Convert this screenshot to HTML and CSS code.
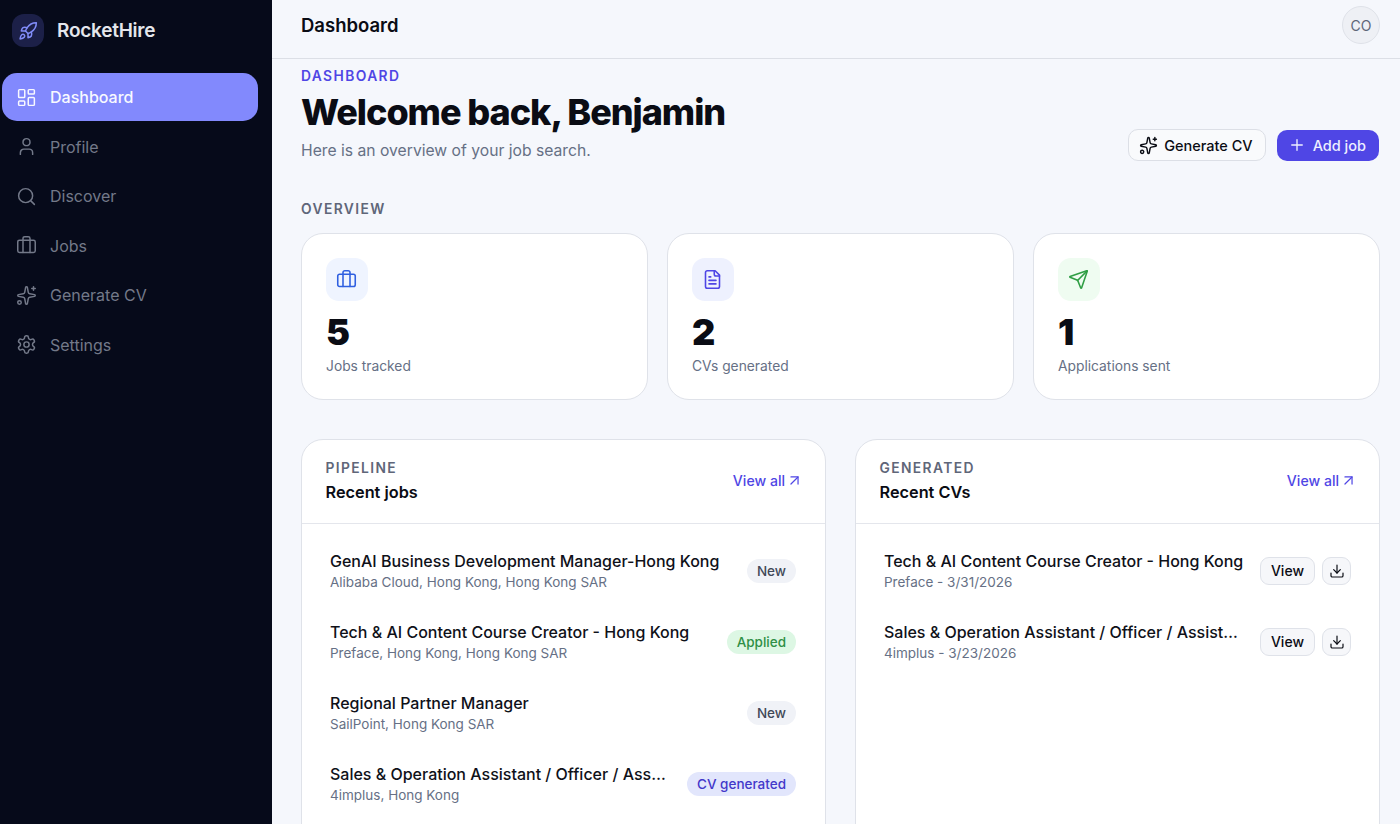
FILE: index.html
```html
<!DOCTYPE html>
<html lang="en">
<head>
    <meta charset="UTF-8">
    <meta name="viewport" content="width=device-width, initial-scale=1.0">
    <title>RocketHire</title>

    <link rel="stylesheet" href="styles.css">
</head>
<body>
    <svg class="sprite" xmlns="http://www.w3.org/2000/svg">
        <symbol id="i-rocket" viewBox="0 0 24 24"><path d="M4.5 16.5c-1.5 1.26-2 5-2 5s3.74-.5 5-2c.71-.84.7-2.13-.09-2.91a2.18 2.18 0 0 0-2.91-.09z"/><path d="m12 15-3-3a22 22 0 0 1 2-3.95A12.88 12.88 0 0 1 22 2c0 2.72-.78 7.5-6 11a22.35 22.35 0 0 1-4 2z"/><path d="M9 12H4s.55-3.03 2-4c1.62-1.08 5 0 5 0"/><path d="M12 15v5s3.03-.55 4-2c1.08-1.62 0-5 0-5"/></symbol>
        <symbol id="i-dashboard" viewBox="0 0 24 24"><rect x="3" y="3" width="7" height="9" rx="1"/><rect x="14" y="3" width="7" height="5" rx="1"/><rect x="14" y="12" width="7" height="9" rx="1"/><rect x="3" y="16" width="7" height="5" rx="1"/></symbol>
        <symbol id="i-user" viewBox="0 0 24 24"><path d="M19 21v-2a4 4 0 0 0-4-4H9a4 4 0 0 0-4 4v2"/><circle cx="12" cy="7" r="4"/></symbol>
        <symbol id="i-search" viewBox="0 0 24 24"><circle cx="11" cy="11" r="8"/><path d="m21 21-4.3-4.3"/></symbol>
        <symbol id="i-briefcase" viewBox="0 0 24 24"><path d="M16 20V4a2 2 0 0 0-2-2h-4a2 2 0 0 0-2 2v16"/><rect x="2" y="6" width="20" height="14" rx="2"/></symbol>
        <symbol id="i-sparkles" viewBox="0 0 24 24"><path d="M11.017 2.814a1 1 0 0 1 1.966 0l1.051 5.558a2 2 0 0 0 1.594 1.594l5.558 1.051a1 1 0 0 1 0 1.966l-5.558 1.051a2 2 0 0 0-1.594 1.594l-1.051 5.558a1 1 0 0 1-1.966 0l-1.051-5.558a2 2 0 0 0-1.594-1.594l-5.558-1.051a1 1 0 0 1 0-1.966l5.558-1.051a2 2 0 0 0 1.594-1.594z"/><path d="M20 2v4"/><path d="M22 4h-4"/><circle cx="4" cy="20" r="2"/></symbol>
        <symbol id="i-settings" viewBox="0 0 24 24"><path d="M12.22 2h-.44a2 2 0 0 0-2 2v.18a2 2 0 0 1-1 1.73l-.43.25a2 2 0 0 1-2 0l-.15-.08a2 2 0 0 0-2.73.73l-.22.38a2 2 0 0 0 .73 2.73l.15.1a2 2 0 0 1 1 1.72v.51a2 2 0 0 1-1 1.74l-.15.09a2 2 0 0 0-.73 2.73l.22.38a2 2 0 0 0 2.73.73l.15-.08a2 2 0 0 1 2 0l.43.25a2 2 0 0 1 1 1.73V20a2 2 0 0 0 2 2h.44a2 2 0 0 0 2-2v-.18a2 2 0 0 1 1-1.73l.43-.25a2 2 0 0 1 2 0l.15.08a2 2 0 0 0 2.73-.73l.22-.39a2 2 0 0 0-.73-2.73l-.15-.08a2 2 0 0 1-1-1.74v-.5a2 2 0 0 1 1-1.74l.15-.09a2 2 0 0 0 .73-2.73l-.22-.38a2 2 0 0 0-2.73-.73l-.15.08a2 2 0 0 1-2 0l-.43-.25a2 2 0 0 1-1-1.73V4a2 2 0 0 0-2-2z"/><circle cx="12" cy="12" r="3"/></symbol>
        <symbol id="i-file" viewBox="0 0 24 24"><path d="M15 2H6a2 2 0 0 0-2 2v16a2 2 0 0 0 2 2h12a2 2 0 0 0 2-2V7Z"/><path d="M14 2v4a2 2 0 0 0 2 2h4"/><path d="M10 9H8"/><path d="M16 13H8"/><path d="M16 17H8"/></symbol>
        <symbol id="i-send" viewBox="0 0 24 24"><path d="M14.536 21.686a.5.5 0 0 0 .937-.024l6.5-19a.496.496 0 0 0-.635-.635l-19 6.5a.5.5 0 0 0-.024.937l7.93 3.18a2 2 0 0 1 1.112 1.11z"/><path d="m21.854 2.147-10.94 10.939"/></symbol>
        <symbol id="i-plus" viewBox="0 0 24 24"><path d="M5 12h14"/><path d="M12 5v14"/></symbol>
        <symbol id="i-arrow" viewBox="0 0 24 24"><path d="M7 7h10v10"/><path d="M7 17 17 7"/></symbol>
        <symbol id="i-download" viewBox="0 0 24 24"><path d="M12 15V3"/><path d="M21 15v4a2 2 0 0 1-2 2H5a2 2 0 0 1-2-2v-4"/><path d="m7 10 5 5 5-5"/></symbol>
    </svg>

    <div class="app">
        <aside class="sidebar">
            <div class="brand">
                <span class="brand-mark"><svg class="icon"><use href="#i-rocket"/></svg></span>
                <span class="brand-name">RocketHire</span>
            </div>
            <nav class="nav">
                <a class="nav-item active"><svg class="icon"><use href="#i-dashboard"/></svg>Dashboard</a>
                <a class="nav-item"><svg class="icon"><use href="#i-user"/></svg>Profile</a>
                <a class="nav-item"><svg class="icon"><use href="#i-search"/></svg>Discover</a>
                <a class="nav-item"><svg class="icon"><use href="#i-briefcase"/></svg>Jobs</a>
                <a class="nav-item"><svg class="icon"><use href="#i-sparkles"/></svg>Generate CV</a>
                <a class="nav-item"><svg class="icon"><use href="#i-settings"/></svg>Settings</a>
            </nav>
        </aside>

        <div class="main">
            <header class="topbar">
                <span class="topbar-title">Dashboard</span>
                <span class="avatar">CO</span>
            </header>

            <div class="content">
                <section class="page-head">
                    <div>
                        <div class="eyebrow">DASHBOARD</div>
                        <h1>Welcome back, Benjamin</h1>
                        <p class="lead">Here is an overview of your job search.</p>
                    </div>
                    <div class="actions">
                        <button class="btn btn-outline"><svg class="icon"><use href="#i-sparkles"/></svg>Generate CV</button>
                        <button class="btn btn-primary"><svg class="icon"><use href="#i-plus"/></svg>Add job</button>
                    </div>
                </section>

                <div class="section-label">OVERVIEW</div>
                <section class="stats">
                    <div class="stat">
                        <span class="stat-icon blue"><svg class="icon"><use href="#i-briefcase"/></svg></span>
                        <div class="stat-value">5</div>
                        <div class="stat-label">Jobs tracked</div>
                    </div>
                    <div class="stat">
                        <span class="stat-icon indigo"><svg class="icon"><use href="#i-file"/></svg></span>
                        <div class="stat-value">2</div>
                        <div class="stat-label">CVs generated</div>
                    </div>
                    <div class="stat">
                        <span class="stat-icon green"><svg class="icon"><use href="#i-send"/></svg></span>
                        <div class="stat-value">1</div>
                        <div class="stat-label">Applications sent</div>
                    </div>
                </section>

                <section class="panels">
                    <div class="panel">
                        <div class="panel-head">
                            <div>
                                <div class="panel-label">PIPELINE</div>
                                <div class="panel-title">Recent jobs</div>
                            </div>
                            <a class="view-all">View all<svg class="icon"><use href="#i-arrow"/></svg></a>
                        </div>
                        <div class="list">
                            <div class="row">
                                <div class="row-text">
                                    <div class="row-title">GenAI Business Development Manager-Hong Kong</div>
                                    <div class="row-meta">Alibaba Cloud, Hong Kong, Hong Kong SAR</div>
                                </div>
                                <span class="badge">New</span>
                            </div>
                            <div class="row">
                                <div class="row-text">
                                    <div class="row-title">Tech &amp; AI Content Course Creator - Hong Kong</div>
                                    <div class="row-meta">Preface, Hong Kong, Hong Kong SAR</div>
                                </div>
                                <span class="badge applied">Applied</span>
                            </div>
                            <div class="row">
                                <div class="row-text">
                                    <div class="row-title">Regional Partner Manager</div>
                                    <div class="row-meta">SailPoint, Hong Kong SAR</div>
                                </div>
                                <span class="badge">New</span>
                            </div>
                            <div class="row">
                                <div class="row-text">
                                    <div class="row-title">Sales &amp; Operation Assistant / Officer / Assistant Manager</div>
                                    <div class="row-meta">4implus, Hong Kong</div>
                                </div>
                                <span class="badge generated">CV generated</span>
                            </div>
                        </div>
                    </div>

                    <div class="panel">
                        <div class="panel-head">
                            <div>
                                <div class="panel-label">GENERATED</div>
                                <div class="panel-title">Recent CVs</div>
                            </div>
                            <a class="view-all">View all<svg class="icon"><use href="#i-arrow"/></svg></a>
                        </div>
                        <div class="list">
                            <div class="row">
                                <div class="row-text">
                                    <div class="row-title">Tech &amp; AI Content Course Creator - Hong Kong</div>
                                    <div class="row-meta">Preface - 3/31/2026</div>
                                </div>
                                <div class="row-actions">
                                    <button class="mini-btn">View</button>
                                    <button class="mini-btn square"><svg class="icon"><use href="#i-download"/></svg></button>
                                </div>
                            </div>
                            <div class="row">
                                <div class="row-text">
                                    <div class="row-title">Sales &amp; Operation Assistant / Officer / Assistant Manager</div>
                                    <div class="row-meta">4implus - 3/23/2026</div>
                                </div>
                                <div class="row-actions">
                                    <button class="mini-btn">View</button>
                                    <button class="mini-btn square"><svg class="icon"><use href="#i-download"/></svg></button>
                                </div>
                            </div>
                        </div>
                    </div>
                </section>
            </div>
        </div>
    </div>
</body>
</html>
```

FILE: styles.css
```css
* {
    box-sizing: border-box;
}

html, body {
    height: 100%;
}

body {
    margin: 0;
    overflow: hidden;
    font-family: "Inter", "Liberation Sans", sans-serif;
    color: #0a0c14;
    background: #f5f7fc;
}

.sprite {
    display: none;
}

.icon {
    width: 18px;
    height: 18px;
    flex: none;
    fill: none;
    stroke: currentColor;
    stroke-width: 1.8;
    stroke-linecap: round;
    stroke-linejoin: round;
}

.app {
    display: flex;
    height: 824px;
    overflow: hidden;
}

/* sidebar */
.sidebar {
    width: 272px;
    flex: none;
    background: #060a1a;
    padding: 14px 14px 0 2px;
}

.brand {
    display: flex;
    align-items: center;
    gap: 13px;
    height: 33px;
    padding-left: 10px;
    margin-bottom: 26px;
}

.brand-mark {
    width: 32px;
    height: 33px;
    display: flex;
    align-items: center;
    justify-content: center;
    border-radius: 12px;
    background: #1c2048;
    color: #818cf8;
}

.brand-mark .icon {
    width: 20px;
    height: 20px;
}

.brand-name {
    font-size: 19px;
    line-height: 31px;
    font-weight: 600;
    letter-spacing: -0.25px;
    color: #e4e6ec;
}

.nav {
    display: flex;
    flex-direction: column;
    gap: 1.5px;
}

.nav-item {
    display: flex;
    align-items: center;
    gap: 13.5px;
    height: 48px;
    padding-left: 13.5px;
    border-radius: 15px;
    font-size: 16px;
    font-weight: 400;
    color: #737989;
}

.nav-item .icon {
    width: 21px;
    height: 21px;
    stroke-width: 1.7;
}

.nav-item.active {
    background: #8289fd;
    color: #f8f9ff;
    font-weight: 500;
}

/* main column */
.main {
    flex: 1;
    min-width: 0;
    height: 824px;
    overflow: hidden;
}

.topbar {
    height: 59px;
    display: flex;
    align-items: center;
    justify-content: space-between;
    padding: 0 20px 8px 29px;
    border-bottom: 1px solid #dcdfe6;
}

.topbar-title {
    font-size: 18.5px;
    font-weight: 600;
}

.avatar {
    width: 38px;
    height: 38px;
    display: flex;
    align-items: center;
    justify-content: center;
    border-radius: 50%;
    border: 1px solid #dfe2e9;
    background: #eef0f5;
    font-size: 14px;
    color: #5f6679;
}

.content {
    padding: 8px 20px 0 29px;
}

.page-head {
    display: flex;
    align-items: flex-end;
    justify-content: space-between;
}

.eyebrow {
    font-size: 13.8px;
    line-height: 18px;
    font-weight: 600;
    letter-spacing: 1.4px;
    color: #4f46e5;
}

h1 {
    margin: 7px 0 0;
    font-size: 36px;
    line-height: 40px;
    font-weight: 800;
    letter-spacing: -1.05px;
    color: #0a0c14;
}

.lead {
    margin: 8px 0 0;
    font-size: 15.7px;
    line-height: 22px;
    color: #667085;
}

.actions {
    display: flex;
    align-items: center;
    gap: 11px;
    margin: 0 1px 1px 0;
}

.btn {
    display: flex;
    align-items: center;
    border-radius: 10px;
    font-family: inherit;
    font-size: 14.5px;
    font-weight: 500;
}

.btn-outline {
    gap: 6px;
    height: 32px;
    padding: 0 12px 0 10px;
    border: 1px solid #dcdfe6;
    background: #f9fafc;
    color: #0a0c14;
}

.btn-outline .icon {
    width: 19px;
    height: 19px;
}

.btn-primary {
    gap: 7px;
    height: 31px;
    padding: 0 13px 0 11px;
    border: 0;
    background: #4f46e5;
    color: #eef0ff;
}

.section-label {
    margin-top: 38px;
    font-size: 13.8px;
    line-height: 18px;
    font-weight: 600;
    letter-spacing: 1.4px;
    color: #5f6679;
}

/* stat cards */
.stats {
    display: grid;
    grid-template-columns: repeat(3, 1fr);
    gap: 19px;
    margin-top: 15px;
}

.stat {
    height: 167px;
    padding: 24px;
    background: #fff;
    border: 1px solid #dfe2e9;
    border-radius: 22px;
}

.stat-icon {
    width: 42.5px;
    height: 42.5px;
    margin-left: -0.5px;
    display: flex;
    align-items: center;
    justify-content: center;
    border-radius: 13px;
}

.stat-icon .icon {
    width: 21px;
    height: 21px;
}

.stat-icon.blue {
    background: #eff4ff;
    color: #2f5fe0;
}

.stat-icon.indigo {
    background: #eef1fe;
    color: #4f46e5;
}

.stat-icon.green {
    background: #effcf1;
    color: #2f9e44;
}

.stat-value {
    margin-top: 11.5px;
    font-size: 36px;
    line-height: 40px;
    font-weight: 900;
    color: #0a0c14;
}

.stat-label {
    margin-top: 4px;
    font-size: 13.8px;
    line-height: 20px;
    color: #667085;
}

/* panels */
.panels {
    display: grid;
    grid-template-columns: repeat(2, minmax(0, 1fr));
    gap: 29px;
    margin-top: 39px;
}

.panel {
    min-width: 0;
    height: 500px;
    background: #fff;
    border: 1px solid #dfe2e9;
    border-radius: 22px;
}

.panel-head {
    height: 84px;
    display: flex;
    align-items: center;
    justify-content: space-between;
    padding: 0 22px 2px 23.5px;
    border-bottom: 1px solid #e4e6ec;
}

.panel-label {
    font-size: 13.8px;
    line-height: 18px;
    font-weight: 600;
    letter-spacing: 1.4px;
    color: #5f6679;
}

.panel-title {
    margin-top: 4px;
    font-size: 16.3px;
    line-height: 22px;
    font-weight: 600;
}

.view-all {
    display: flex;
    align-items: center;
    gap: 1px;
    font-size: 14.1px;
    font-weight: 500;
    color: #4f46e5;
}

.view-all .icon {
    width: 17px;
    height: 17px;
    stroke-width: 1.7;
}

.list {
    padding: 11px 29px 0 28px;
}

.row {
    height: 71px;
    display: flex;
    align-items: center;
    justify-content: space-between;
    gap: 16px;
}

.row-text {
    min-width: 0;
}

.row-title {
    font-size: 16px;
    line-height: 22px;
    font-weight: 500;
    color: #0f1119;
    white-space: nowrap;
    overflow: hidden;
    text-overflow: ellipsis;
}

.row-meta {
    font-size: 13.5px;
    line-height: 20px;
    color: #667085;
    white-space: nowrap;
}

.badge {
    flex: none;
    height: 24px;
    display: flex;
    align-items: center;
    margin-left: 2px;
    padding: 0 10px;
    border-radius: 12px;
    background: #f0f2f7;
    font-size: 13.5px;
    font-weight: 500;
    color: #414858;
}

.badge.applied {
    background: #ddf7e4;
    color: #2f8f46;
}

.badge.generated {
    background: #e2e6fc;
    color: #4338ca;
}

.row-actions {
    flex: none;
    display: flex;
    align-items: center;
    gap: 7px;
    margin-right: -1px;
}

.mini-btn {
    height: 28px;
    padding: 0 10px;
    display: flex;
    align-items: center;
    justify-content: center;
    border: 1px solid #dfe2e9;
    border-radius: 9px;
    background: #f6f7fa;
    font-family: inherit;
    font-size: 14px;
    font-weight: 500;
    color: #0a0c14;
}

.mini-btn.square {
    width: 29px;
    padding: 0;
}

.mini-btn .icon {
    width: 16px;
    height: 16px;
}
```
